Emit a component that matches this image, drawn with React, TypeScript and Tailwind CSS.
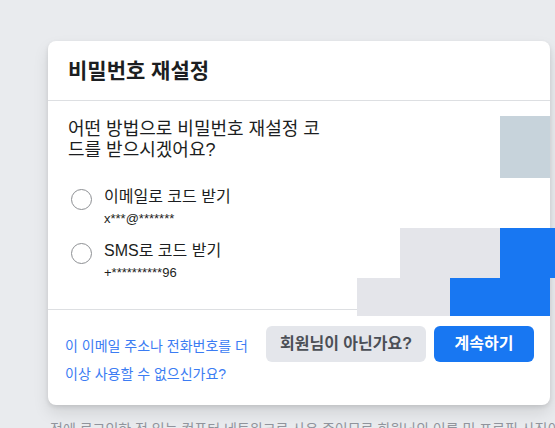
const font = "font-['Liberation_Sans','Noto_Sans_CJK_KR',sans-serif]";

function Radio() {
  return <span className="mt-[2px] h-[21px] w-[21px] shrink-0 rounded-full border-[1.5px] border-[#8d8f93] bg-white" />;
}

function Option({ label, sub }: { label: string; sub: string }) {
  return (
    <label className="flex items-start gap-3 pl-[3px]">
      <Radio />
      <div>
        <div className="text-[16px] leading-5 text-[#1c1e21]">{label}</div>
        <div className="mt-[4px] text-[13px] leading-4 text-[#1c1e21]">{sub}</div>
      </div>
    </label>
  );
}

export default function App() {
  return (
    <div className={`relative h-[428px] w-[555px] overflow-hidden bg-[#e9ebee] pl-[48px] pt-[41px] ${font}`}>
      <div className="w-[502px] rounded-lg bg-white shadow-[0_2px_4px_rgba(0,0,0,0.1),0_8px_16px_rgba(0,0,0,0.1)]">
        <div className="flex h-[60px] items-center border-b border-[#dddfe2] px-5">
          <h2 className="text-[21px] font-bold text-[#1c1e21]">비밀번호 재설정</h2>
        </div>

        <div className="flex h-[208px] px-5">
          <div className="w-[264px] pt-[18px]">
            <p className="text-[18px] leading-[21px] text-[#1c1e21]">어떤 방법으로 비밀번호 재설정 코드를 받으시겠어요?</p>
            <div className="mt-[26px] flex flex-col gap-[14px]">
              <Option label="이메일로 코드 받기" sub="x***@*******" />
              <Option label="SMS로 코드 받기" sub="+**********96" />
            </div>
          </div>
        </div>

        <div className="flex items-start justify-between border-t border-[#dddfe2] pb-[17px] pl-[17px] pr-4 pt-4">
          <a className="mt-[6px] w-[188px] text-[14px] leading-[28px] text-[#3b7cf3]">
            이 이메일 주소나 전화번호를 더 이상 사용할 수 없으신가요?
          </a>
          <div className="flex gap-2">
            <button className="flex h-9 w-[160px] items-center justify-center rounded-md bg-[#e4e6eb] text-[16px] font-bold text-[#4b4f56]">
              회원님이 아닌가요?
            </button>
            <button className="flex h-9 w-[100px] items-center justify-center rounded-md bg-[#1877f2] text-[16px] font-bold text-white">
              계속하기
            </button>
          </div>
        </div>
      </div>

      <p className="ml-[2px] mt-[14px] whitespace-nowrap text-[14px] text-[#90949c]">
        전에 로그인한 적 있는 컴퓨터 네트워크로 사용 중이므로 회원님의 이름 및 프로필 사진이 표시됩니다.
      </p>

      {/* leftover placeholder blocks painted over the card */}
      <div className="absolute left-[500px] top-[116px] h-[62px] w-[50px] bg-[#c7d3db]" />
      <div className="absolute left-[400px] top-[228px] h-[50px] w-[100px] bg-[#e4e5ea]" />
      <div className="absolute left-[500px] top-[228px] h-[50px] w-[55px] bg-[#1877f2]" />
      <div className="absolute left-[357px] top-[278px] h-[38px] w-[93px] bg-[#e4e5ea]" />
      <div className="absolute left-[450px] top-[278px] h-[38px] w-[100px] bg-[#1877f2]" />
    </div>
  );
}
